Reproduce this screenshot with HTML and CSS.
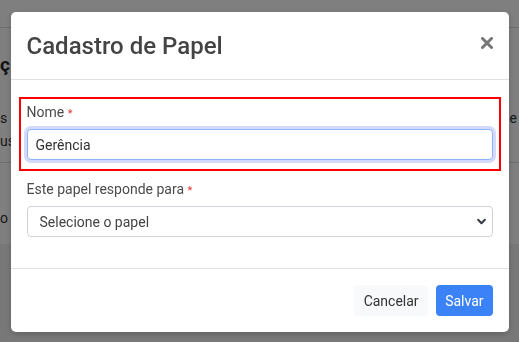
FILE: index.html
```html
<!DOCTYPE html>
<html lang="pt-BR">
<head>
    <meta charset="UTF-8">
    <meta name="viewport" content="width=device-width, initial-scale=1.0">
    <title>Cadastro de Papel</title>
    <link rel="stylesheet" href="styles.css">
</head>
<body>
    <div class="page">
        <div class="topbar"></div>
        <div class="content">
            <h2 class="page-title">ç</h2>
            <div class="table-row">
                <p class="row-left">s</p>
                <p class="row-left">us</p>
                <p class="row-right">ue</p>
            </div>
            <div class="table-row short">
                <p class="row-left">o p</p>
            </div>
        </div>
        <div class="page-foot"></div>
    </div>

    <div class="backdrop">
        <div class="modal">
            <div class="modal-header">
                <h1 class="modal-title">Cadastro de Papel</h1>
                <button class="close" type="button" aria-label="Fechar">
                    <svg width="12" height="12" viewBox="0 0 12 12">
                        <path d="M1.5 1.5l9 9M10.5 1.5l-9 9" stroke="#777" stroke-width="3" stroke-linecap="round"/>
                    </svg>
                </button>
            </div>
            <form class="modal-body">
                <div class="form-group highlight">
                    <label for="nome">Nome <span class="req">*</span></label>
                    <input type="text" id="nome" class="form-control focused" value="Gerência">
                </div>
                <div class="form-group">
                    <label for="papel">Este papel responde para <span class="req">*</span></label>
                    <div class="select-wrap">
                        <select id="papel" class="form-control">
                            <option>Selecione o papel</option>
                        </select>
                        <svg class="chevron" width="11" height="9" viewBox="0 0 16 16">
                            <path d="M2 5l6 6 6-6" fill="none" stroke="#343a40" stroke-width="3.5" stroke-linecap="round" stroke-linejoin="round"/>
                        </svg>
                    </div>
                </div>
            </form>
            <div class="modal-footer">
                <button class="btn btn-light" type="button">Cancelar</button>
                <button class="btn btn-primary" type="button">Salvar</button>
            </div>
        </div>
    </div>
</body>
</html>
```

FILE: styles.css
```css
* {
    box-sizing: border-box;
}
body {
    margin: 0;
    font-family: Roboto, "Liberation Sans", sans-serif;
    color: #333;
    background-color: #ffffff;
    height: 342px;
    overflow: hidden;
}

/* page behind the modal */
.page {
    height: 342px;
    display: flex;
    flex-direction: column;
}
.topbar {
    height: 28px;
    border-bottom: 1px solid #dcdcdc;
}
.content {
    flex: 1;
}
.page-title {
    margin: 0;
    padding-top: 25px;
    font-size: 19px;
    font-weight: bold;
    color: #222;
    height: 75px;
}
.table-row {
    position: relative;
    border-bottom: 1px solid #dcdcdc;
    height: 60px;
    padding-top: 4px;
}
.table-row.short {
    border-bottom: none;
    height: 81px;
    padding-top: 44px;
}
.row-left {
    margin: 0;
    font-size: 14px;
    line-height: 23px;
}
.row-right {
    position: absolute;
    right: 2px;
    top: 4px;
    margin: 0;
    font-size: 14px;
    line-height: 23px;
}
.page-foot {
    flex: 1;
    background-color: #f0f0f0;
}

/* modal */
.backdrop {
    position: fixed;
    inset: 0;
    background-color: rgba(0, 0, 0, 0.5);
    display: flex;
    justify-content: center;
    align-items: flex-start;
    padding-top: 12px;
}
.modal {
    width: 498px;
    background-color: #ffffff;
    border-radius: 5px;
    box-shadow: 0 2px 6px rgba(0, 0, 0, 0.2);
}
.modal-header {
    display: flex;
    align-items: center;
    justify-content: space-between;
    height: 68px;
    padding: 0 16px;
    border-bottom: 1px solid #dee2e6;
}
.modal-title {
    margin: 0;
    font-size: 24px;
    font-weight: 500;
    color: #444;
}
.close {
    display: flex;
    border: none;
    background: none;
    padding: 0;
    margin-top: -6px;
}
.modal-body {
    margin: 0;
    padding: 17px 16px 15px;
}
.form-group {
    display: flex;
    flex-direction: column;
    margin-bottom: 16px;
}
.form-group.highlight {
    margin: 0 -8px 8px;
    padding: 3px 6px 9px;
    border: 2px solid #ff0000;
}
label {
    font-size: 14px;
    line-height: 21px;
    color: #4b4b4b;
    margin-bottom: 5px;
}
.req {
    color: #e3342f;
    font-size: 11px;
}
.form-control {
    width: 100%;
    height: 31px;
    padding: 4px 12px;
    font-family: Roboto, "Liberation Sans", sans-serif;
    font-size: 14px;
    color: #333;
    background-color: #fff;
    border: 1px solid #ced4da;
    border-radius: 4px;
}
.form-control.focused {
    padding-left: 8px;
    border-color: #8fb4fb;
    box-shadow: 0 0 0 3px #d5d9fb;
    outline: none;
}
.select-wrap {
    position: relative;
}
select.form-control {
    appearance: none;
    padding-left: 12px;
    color: #444;
}
.chevron {
    position: absolute;
    right: 6px;
    top: 11px;
    pointer-events: none;
}
.modal-footer {
    display: flex;
    justify-content: flex-end;
    gap: 8px;
    padding: 16px 16px 16px;
    border-top: 1px solid #dee2e6;
}
.btn {
    height: 31px;
    padding: 0 9px;
    font-family: Roboto, "Liberation Sans", sans-serif;
    font-size: 14px;
    border: none;
    border-radius: 4px;
}
.btn-light {
    background-color: #f8f9fa;
    color: #333;
    padding: 0 9.5px;
}
.btn-primary {
    background-color: #3b82f6;
    color: #ffffff;
}
```
